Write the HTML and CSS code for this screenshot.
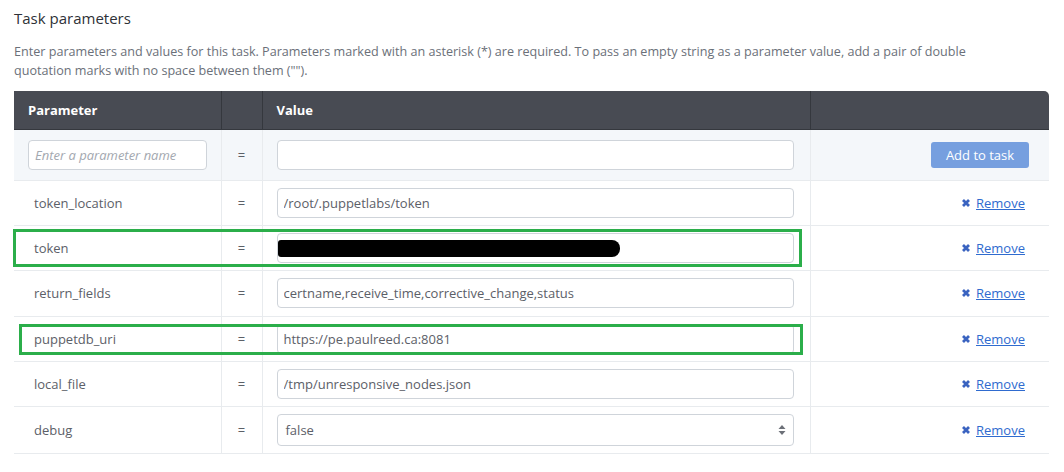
FILE: index.html
```html
<!DOCTYPE html>
<html>
<head>
<meta charset="utf-8">
<link rel="stylesheet" href="styles.css">
</head>
<body>
<div class="page">
  <h2 class="title">Task parameters</h2>
  <p class="desc">Enter parameters and values for this task. Parameters marked with an asterisk (*) are required. To pass an empty string as a parameter value, add a pair of double quotation marks with no space between them ("").</p>
  <div class="table-wrap">
    <table class="params">
      <colgroup>
        <col class="c-name"><col class="c-eq"><col class="c-val"><col class="c-act">
      </colgroup>
      <thead>
        <tr><th>Parameter</th><th></th><th>Value</th><th></th></tr>
      </thead>
      <tbody>
        <tr class="new-row">
          <td><input class="inp name-inp" placeholder="Enter a parameter name"></td>
          <td class="eq">=</td>
          <td><input class="inp"></td>
          <td class="act"><button class="add-btn">Add to task</button></td>
        </tr>
        <tr>
          <td class="pname">token_location</td><td class="eq">=</td>
          <td><input class="inp" value="/root/.puppetlabs/token"></td>
          <td class="act"><a class="remove" href="#"><svg class="x" viewBox="0 0 10 10" width="10" height="10"><path d="M2 2L8 8M8 2L2 8"/></svg><span>Remove</span></a></td>
        </tr>
        <tr>
          <td class="pname">token</td><td class="eq">=</td>
          <td><div class="redact-wrap"><input class="inp" value=""><span class="redact"></span></div></td>
          <td class="act"><a class="remove" href="#"><svg class="x" viewBox="0 0 10 10" width="10" height="10"><path d="M2 2L8 8M8 2L2 8"/></svg><span>Remove</span></a></td>
        </tr>
        <tr>
          <td class="pname">return_fields</td><td class="eq">=</td>
          <td><input class="inp" value="certname,receive_time,corrective_change,status"></td>
          <td class="act"><a class="remove" href="#"><svg class="x" viewBox="0 0 10 10" width="10" height="10"><path d="M2 2L8 8M8 2L2 8"/></svg><span>Remove</span></a></td>
        </tr>
        <tr>
          <td class="pname">puppetdb_uri</td><td class="eq">=</td>
          <td><input class="inp" value="https://pe.paulreed.ca:8081"></td>
          <td class="act"><a class="remove" href="#"><svg class="x" viewBox="0 0 10 10" width="10" height="10"><path d="M2 2L8 8M8 2L2 8"/></svg><span>Remove</span></a></td>
        </tr>
        <tr>
          <td class="pname">local_file</td><td class="eq">=</td>
          <td><input class="inp" value="/tmp/unresponsive_nodes.json"></td>
          <td class="act"><a class="remove" href="#"><svg class="x" viewBox="0 0 10 10" width="10" height="10"><path d="M2 2L8 8M8 2L2 8"/></svg><span>Remove</span></a></td>
        </tr>
        <tr class="last-row">
          <td class="pname">debug</td><td class="eq">=</td>
          <td><div class="sel"><span>false</span><svg class="sel-arrows" viewBox="0 0 8 12" width="8" height="12"><path d="M4 1L7.5 5H0.5Z"/><path d="M4 11L7.5 7H0.5Z"/></svg></div></td>
          <td class="act"><a class="remove" href="#"><svg class="x" viewBox="0 0 10 10" width="10" height="10"><path d="M2 2L8 8M8 2L2 8"/></svg><span>Remove</span></a></td>
        </tr>
      </tbody>
    </table>
    <div class="hl hl-token"></div>
    <div class="hl hl-uri"></div>
  </div>
</div>
</body>
</html>
```

FILE: styles.css
```css
* { box-sizing: border-box; }
html, body { margin: 0; padding: 0; background: #fff; }
body {
  font-family: "Open Sans", "Noto Sans", sans-serif;
  color: #5c6068;
}
.page { padding: 7px 14px 0 14px; }
.title {
  margin: 0;
  font-size: 15px;
  font-weight: 400;
  color: #2e3137;
  line-height: 22px;
}
.desc {
  margin: 13px 0 0 0;
  font-size: 12.6px;
  line-height: 19px;
  color: #6b7079;
  width: 1000px;
}
.table-wrap { position: relative; margin-top: 11px; width: 1035px; }
.params {
  width: 1035px;
  border-collapse: collapse;
  table-layout: fixed;
  font-size: 13px;
}
.c-name { width: 207px; }
.c-eq { width: 41px; }
.c-val { width: 548px; }
.c-act { width: 239px; }
.params thead th {
  background: #484b53;
  color: #fff;
  font-weight: 700;
  text-align: left;
  height: 38px;
  padding: 0 14px;
  font-size: 13px;
  border-left: 1px solid #35383e;
  border-bottom: 1px solid #35383e;
}
.params thead th:first-child { border-left: none; }
.params thead th:last-child { border-top-right-radius: 5px; }
.params td {
  height: 45.4px;
  padding: 0 14px;
  border-bottom: 1px solid #e8ebee;
  border-left: 1px solid #e8ebee;
  vertical-align: middle;
}
.params td:first-child { border-left: none; }
.params tr.new-row td { height: 51px; background: #f4f7fa; }
.params tr.last-row td { height: 47px; }
.pname { padding-left: 20px !important; }
.eq { text-align: center; padding: 0 !important; }
.inp {
  display: block;
  width: 517px;
  height: 30px;
  border: 1px solid #cfd4da;
  border-radius: 4px;
  background: #fff;
  font-family: inherit;
  font-size: 13px;
  color: #5c6068;
  padding: 0 6px;
  outline: none;
}
.name-inp { width: 179px; }
.name-inp::placeholder { color: #a3a8b0; font-style: italic; }
.act { text-align: right; padding-right: 24px !important; }
.add-btn {
  width: 98px;
  height: 26px;
  border: none;
  border-radius: 3px;
  background: #769fdf;
  color: #fff;
  font-family: inherit;
  font-size: 13px;
  padding: 0;
  margin-right: -4px;
}
.remove {
  color: #2f6bcf;
  text-decoration: underline;
  display: inline-flex;
  align-items: center;
  gap: 5px;
  font-size: 13px;
}
.remove .x path { stroke: #3a63c0; stroke-width: 2.8; stroke-linecap: butt; fill: none; }
.redact-wrap { position: relative; }
.redact {
  position: absolute;
  left: 1px;
  top: 7px;
  width: 342px;
  height: 17px;
  background: #000;
  border-radius: 3px 8px 8px 3px;
}
.sel {
  width: 517px;
  height: 32px;
  border: 1px solid #cfd4da;
  border-radius: 4px;
  background: #fff;
  display: flex;
  align-items: center;
  justify-content: space-between;
  padding: 0 7px 0 8px;
  font-size: 13px;
  color: #5c6068;
}
.sel-arrows path { fill: #6c7078; }
.hl {
  position: absolute;
  border: 3px solid #2bae4a;
  pointer-events: none;
}
.hl-token { left: -1px; top: 138px; width: 789px; height: 38px; }
.hl-uri { left: 5px; top: 233px; width: 784px; height: 31px; }
```
